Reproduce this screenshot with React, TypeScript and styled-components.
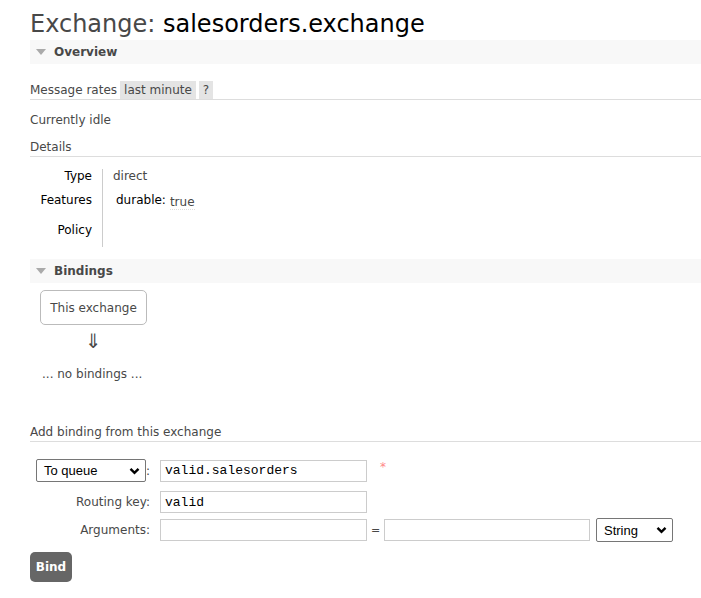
import React from "react";
import styled, { createGlobalStyle } from "styled-components";

const Global = createGlobalStyle`
  html, body { margin: 0; padding: 0; background: #fff; }
  body {
    font-family: "DejaVu Sans", Verdana, sans-serif;
    font-size: 12px;
    color: #484848;
  }
`;

const Page = styled.div`
  padding: 10px 0 0 30px;
`;

const Title = styled.h1`
  margin: 0 0 1px;
  font-size: 24px;
  font-weight: normal;
  line-height: 29px;
  color: #484848;
  b { font-weight: normal; color: #000; }
`;

const SectionHeader = styled.div`
  height: 24px;
  background: #f8f8f8;
  display: flex;
  align-items: center;
  padding-left: 6px;
  font-weight: bold;
  color: #484848;
  gap: 8px;
`;

const Triangle = styled.span`
  width: 0;
  height: 0;
  border-left: 5.5px solid transparent;
  border-right: 5.5px solid transparent;
  border-top: 6px solid #aaa;
`;

const RatesRow = styled.div`
  margin-top: 17px;
  display: flex;
  align-items: center;
  gap: 3px;
  height: 18px;
  border-bottom: 1px solid #ddd;
`;

const Chip = styled.span`
  background: #e4e4e4;
  height: 18px;
  line-height: 18px;
  padding: 0 4px;
`;

const Line = styled.div<{ $top: number; $rule?: boolean }>`
  margin-top: ${(p) => p.$top}px;
  line-height: 16px;
  padding-bottom: ${(p) => (p.$rule ? 1 : 0)}px;
  border-bottom: ${(p) => (p.$rule ? "1px solid #ddd" : "none")};
`;

const Details = styled.div`
  margin-top: 12px;
  display: grid;
  grid-template-columns: 72px auto;
`;

const DLabel = styled.div<{ $h: number; $pad?: number }>`
  height: ${(p) => p.$h}px;
  padding: ${(p) => p.$pad ?? 0}px 10px 0 0;
  box-sizing: border-box;
  color: #000;
  display: flex;
  align-items: flex-start;
  justify-content: flex-end;
`;

const DValue = styled.div<{ $h: number }>`
  height: ${(p) => p.$h}px;
  border-left: 1px solid #ccc;
  padding-left: 10px;
  display: flex;
  align-items: flex-start;
`;

const Abbr = styled.span`
  border-bottom: 1px dotted #ddd;
  margin-left: 4px;
  margin-top: 2px;
`;

const Key = styled.span`
  color: #000;
  margin-left: 3px;
`;

const Bindings = styled.div`
  margin-top: 12px;
`;

const Node = styled.div`
  margin: 7px 0 0 10px;
  width: 107px;
  height: 35px;
  box-sizing: border-box;
  border: 1px solid #bbb;
  border-radius: 5px;
  display: flex;
  align-items: center;
  justify-content: center;
`;

const Arrow = styled.div`
  width: 107px;
  margin: 2px 0 0 10px;
  text-align: center;
  font-size: 20px;
  line-height: 28px;
  color: #484848;
`;

const NoBindings = styled.div`
  margin: 11px 0 0 12px;
  line-height: 16px;
`;

const Form = styled.div`
  margin-top: 17px;
  display: flex;
  flex-direction: column;
`;

const FormRow = styled.div<{ $top: number }>`
  margin-top: ${(p) => p.$top}px;
  display: flex;
  align-items: center;
`;

const FLabel = styled.div`
  width: 120px;
  margin-right: 10px;
  display: flex;
  align-items: center;
  justify-content: flex-end;
`;

const Select = styled.div<{ $w: number; $h: number }>`
  width: ${(p) => p.$w}px;
  height: ${(p) => p.$h}px;
  box-sizing: border-box;
  border: 1px solid #767676;
  border-radius: 2px;
  display: flex;
  align-items: center;
  justify-content: space-between;
  padding: 0 5px 0 7px;
  font-family: "Liberation Sans", Arial, sans-serif;
  font-size: 13px;
  color: #000;
  background: #fff;
`;

const Input = styled.div<{ $w?: number }>`
  width: ${(p) => p.$w ?? 207}px;
  height: 22px;
  box-sizing: border-box;
  border: 1px solid #ccc;
  padding: 0 4px;
  display: flex;
  align-items: center;
  font-family: "Liberation Mono", "Courier New", monospace;
  font-size: 13px;
  color: #000;
`;

const Star = styled.span`
  color: #f88;
  font-size: 12px;
  align-self: flex-start;
  margin: 1px 0 0 13px;
`;

const Eq = styled.span`
  width: 17px;
  text-align: center;
  font-size: 11px;
`;

const Gap = styled.span<{ $w: number }>`
  width: ${(p) => p.$w}px;
`;

const Button = styled.button`
  margin-top: 10px;
  width: 42px;
  height: 30px;
  border: none;
  border-radius: 5px;
  background: #666;
  color: #fff;
  font-family: "DejaVu Sans", Verdana, sans-serif;
  font-weight: bold;
  font-size: 12px;
  padding: 0;
`;

const Chevron = () => (
  <svg width="11" height="8" viewBox="0 0 11 8">
    <path d="M1.5 1.8 L5.5 5.8 L9.5 1.8" fill="none" stroke="#000" strokeWidth="2.4" />
  </svg>
);

export default function App() {
  return (
    <Page>
      <Global />
      <Title>
        Exchange: <b>salesorders.exchange</b>
      </Title>
      <SectionHeader>
        <Triangle />
        Overview
      </SectionHeader>
      <RatesRow>
        <span>Message rates</span>
        <Chip>last minute</Chip>
        <Chip>?</Chip>
      </RatesRow>
      <Line $top={12}>Currently idle</Line>
      <Line $top={11} $rule>
        Details
      </Line>
      <Details>
        <DLabel $h={24}>Type</DLabel>
        <DValue $h={24}>direct</DValue>
        <DLabel $h={26}>Features</DLabel>
        <DValue $h={26}>
          <Key>durable:</Key>
          <Abbr>true</Abbr>
        </DValue>
        <DLabel $h={28} $pad={4}>
          Policy
        </DLabel>
        <DValue $h={28} />
      </Details>
      <Bindings>
        <SectionHeader>
          <Triangle />
          Bindings
        </SectionHeader>
        <Node>This exchange</Node>
        <Arrow>⇓</Arrow>
        <NoBindings>... no bindings ...</NoBindings>
        <Line $top={42} $rule>
          Add binding from this exchange
        </Line>
      </Bindings>
      <Form>
        <FormRow $top={0}>
          <FLabel>
            <Select $w={110} $h={23}>
              To queue
              <Chevron />
            </Select>
            :
          </FLabel>
          <Input>valid.salesorders</Input>
          <Star>*</Star>
        </FormRow>
        <FormRow $top={9}>
          <FLabel>Routing key:</FLabel>
          <Input>valid</Input>
        </FormRow>
        <FormRow $top={5}>
          <FLabel>Arguments:</FLabel>
          <Input />
          <Eq>=</Eq>
          <Input $w={206} />
          <Gap $w={6} />
          <Select $w={77} $h={24}>
            String
            <Chevron />
          </Select>
        </FormRow>
      </Form>
      <Button>Bind</Button>
    </Page>
  );
}
